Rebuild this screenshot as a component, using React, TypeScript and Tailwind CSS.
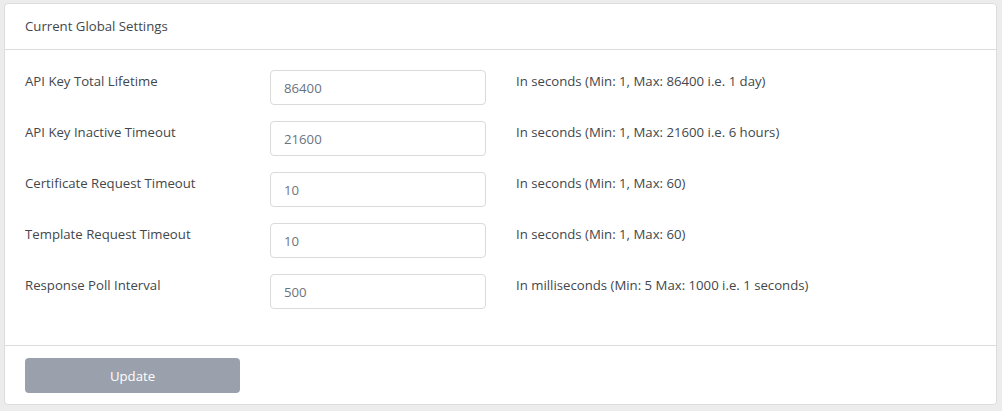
import React from 'react';

interface SettingRow {
  label: string;
  value: string;
  help: string;
}

const rows: SettingRow[] = [
  { label: 'API Key Total Lifetime', value: '86400', help: 'In seconds (Min: 1, Max: 86400 i.e. 1 day)' },
  { label: 'API Key Inactive Timeout', value: '21600', help: 'In seconds (Min: 1, Max: 21600 i.e. 6 hours)' },
  { label: 'Certificate Request Timeout', value: '10', help: 'In seconds (Min: 1, Max: 60)' },
  { label: 'Template Request Timeout', value: '10', help: 'In seconds (Min: 1, Max: 60)' },
  { label: 'Response Poll Interval', value: '500', help: 'In milliseconds (Min: 5 Max: 1000 i.e. 1 seconds)' },
];

export default function App() {
  return (
    <div
      className="w-full h-[411px] bg-[#ececec] pt-[3px] pl-[4px] pr-[5px] text-[13.2px] text-[#43474b]"
      style={{ fontFamily: '"Open Sans", "Liberation Sans", sans-serif' }}
    >
      <div className="h-[402px] bg-white border border-[#dcdcdc] rounded-[4px] flex flex-col">
        {/* Header */}
        <div className="h-[46px] px-5 flex items-center border-b border-[#dcdcdc]">
          <span className="pt-[1px]">Current Global Settings</span>
        </div>

        {/* Settings */}
        <div className="flex-1 px-5 pt-5 flex flex-col gap-4">
          {rows.map((row) => (
            <div key={row.label} className="flex items-start">
              <label className="w-[245px] leading-[22px]">{row.label}</label>
              <input
                type="text"
                defaultValue={row.value}
                className="w-[216px] h-[35px] px-[13px] pt-[1px] border border-[#d9dadc] rounded-[4px] text-[#6b7380] text-[13.2px] outline-none"
                style={{ fontFamily: 'inherit' }}
              />
              <span className="ml-[30px] leading-[22px]">{row.help}</span>
            </div>
          ))}
        </div>

        {/* Footer */}
        <div className="h-[59px] border-t border-[#dcdcdc] px-5 pt-3">
          <button
            type="button"
            className="w-[215px] h-[35px] pt-[2px] rounded-[4px] bg-[#9aa1ac] text-white text-[13.2px]"
            style={{ fontFamily: 'inherit' }}
          >
            Update
          </button>
        </div>
      </div>
    </div>
  );
}
